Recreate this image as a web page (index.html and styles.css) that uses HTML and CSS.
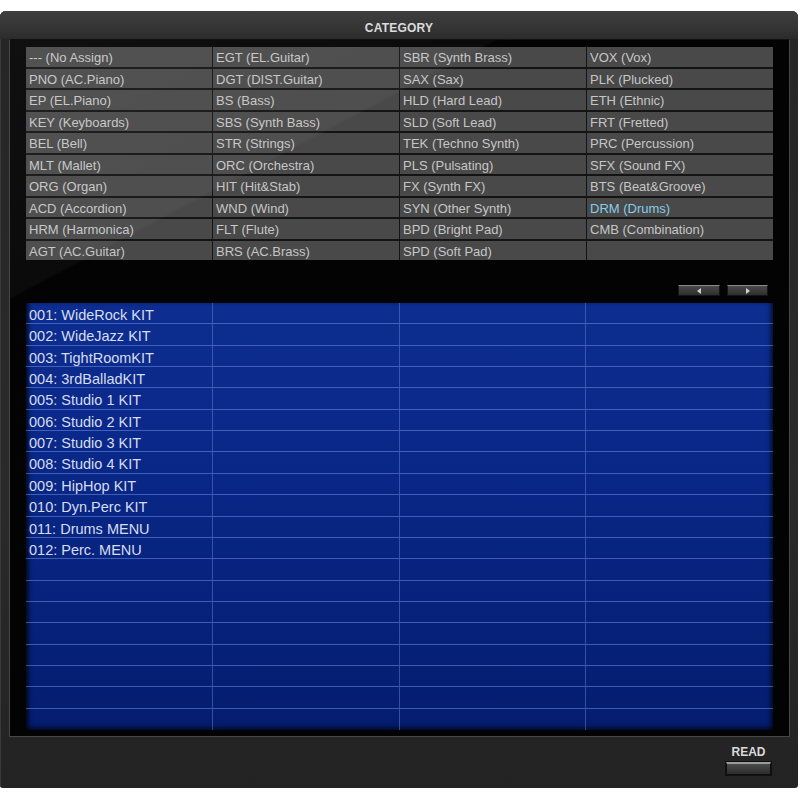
FILE: index.html
```html
<!DOCTYPE html>
<html>
<head>
<meta charset="utf-8">
<link rel="stylesheet" href="styles.css">
</head>
<body>
<div class="frame">
  <div class="title">CATEGORY</div>
  <div class="panel">
    <div class="cats">
      <div class="cell">--- (No Assign)</div><div class="cell">EGT (EL.Guitar)</div><div class="cell">SBR (Synth Brass)</div><div class="cell">VOX (Vox)</div>
      <div class="cell">PNO (AC.Piano)</div><div class="cell">DGT (DIST.Guitar)</div><div class="cell">SAX (Sax)</div><div class="cell">PLK (Plucked)</div>
      <div class="cell">EP (EL.Piano)</div><div class="cell">BS (Bass)</div><div class="cell">HLD (Hard Lead)</div><div class="cell">ETH (Ethnic)</div>
      <div class="cell">KEY (Keyboards)</div><div class="cell">SBS (Synth Bass)</div><div class="cell">SLD (Soft Lead)</div><div class="cell">FRT (Fretted)</div>
      <div class="cell">BEL (Bell)</div><div class="cell">STR (Strings)</div><div class="cell">TEK (Techno Synth)</div><div class="cell">PRC (Percussion)</div>
      <div class="cell">MLT (Mallet)</div><div class="cell">ORC (Orchestra)</div><div class="cell">PLS (Pulsating)</div><div class="cell">SFX (Sound FX)</div>
      <div class="cell">ORG (Organ)</div><div class="cell">HIT (Hit&amp;Stab)</div><div class="cell">FX (Synth FX)</div><div class="cell">BTS (Beat&amp;Groove)</div>
      <div class="cell">ACD (Accordion)</div><div class="cell">WND (Wind)</div><div class="cell">SYN (Other Synth)</div><div class="cell selected">DRM (Drums)</div>
      <div class="cell">HRM (Harmonica)</div><div class="cell">FLT (Flute)</div><div class="cell">BPD (Bright Pad)</div><div class="cell">CMB (Combination)</div>
      <div class="cell">AGT (AC.Guitar)</div><div class="cell">BRS (AC.Brass)</div><div class="cell">SPD (Soft Pad)</div><div class="cell"></div>
    </div>
    <div class="nav">
      <div class="navbtn"><span class="tri left"></span></div>
      <div class="navbtn"><span class="tri right"></span></div>
    </div>
    <div class="list">
      <div class="item">001: WideRock KIT</div><div class="item"></div><div class="item"></div><div class="item"></div>
      <div class="item">002: WideJazz KIT</div><div class="item"></div><div class="item"></div><div class="item"></div>
      <div class="item">003: TightRoomKIT</div><div class="item"></div><div class="item"></div><div class="item"></div>
      <div class="item">004: 3rdBalladKIT</div><div class="item"></div><div class="item"></div><div class="item"></div>
      <div class="item">005: Studio 1 KIT</div><div class="item"></div><div class="item"></div><div class="item"></div>
      <div class="item">006: Studio 2 KIT</div><div class="item"></div><div class="item"></div><div class="item"></div>
      <div class="item">007: Studio 3 KIT</div><div class="item"></div><div class="item"></div><div class="item"></div>
      <div class="item">008: Studio 4 KIT</div><div class="item"></div><div class="item"></div><div class="item"></div>
      <div class="item">009: HipHop KIT</div><div class="item"></div><div class="item"></div><div class="item"></div>
      <div class="item">010: Dyn.Perc KIT</div><div class="item"></div><div class="item"></div><div class="item"></div>
      <div class="item">011: Drums MENU</div><div class="item"></div><div class="item"></div><div class="item"></div>
      <div class="item">012: Perc. MENU</div><div class="item"></div><div class="item"></div><div class="item"></div>
      <div class="item"></div><div class="item"></div><div class="item"></div><div class="item"></div>
      <div class="item"></div><div class="item"></div><div class="item"></div><div class="item"></div>
      <div class="item"></div><div class="item"></div><div class="item"></div><div class="item"></div>
      <div class="item"></div><div class="item"></div><div class="item"></div><div class="item"></div>
      <div class="item"></div><div class="item"></div><div class="item"></div><div class="item"></div>
      <div class="item"></div><div class="item"></div><div class="item"></div><div class="item"></div>
      <div class="item"></div><div class="item"></div><div class="item"></div><div class="item"></div>
      <div class="item last"></div><div class="item last"></div><div class="item last"></div><div class="item last"></div>
    </div>
  </div>
  <div class="footer">
    <div class="read">
      <span class="readlabel">READ</span>
      <div class="readbtn"></div>
    </div>
  </div>
</div>
</body>
</html>
```

FILE: styles.css
```css
html, body {
  margin: 0;
  padding: 0;
  background: #ffffff;
}

body {
  font-family: "Liberation Sans", Arial, sans-serif;
}

.frame {
  margin-top: 11px;
  width: 798px;
  height: 777px;
  border-radius: 6px 6px 3px 3px;
  background: linear-gradient(180deg, #3a3a3a 0px, #262626 28px, #2a2a2a 60%, #232323 100%);
  box-shadow: inset 0 1px 0 #4a4a4a, inset 1px 0 0 #3a3a3a;
  display: flex;
  flex-direction: column;
  box-sizing: border-box;
}

.title {
  height: 28px;
  box-sizing: border-box;
  padding-top: 6px;
  display: flex;
  align-items: center;
  justify-content: center;
  color: #dcdcdc;
  font-size: 12px;
  font-weight: bold;
  letter-spacing: 0.2px;
  background: linear-gradient(180deg, #3e3e3e 0%, #353535 60%, #2b2b2b 100%);
  border-radius: 6px 6px 0 0;
}

.panel {
  position: relative;
  margin-left: 9px;
  width: 781px;
  height: 698px;
  box-sizing: border-box;
  border: 1px solid #474747;
  border-top-color: #111;
  background: #030303;
  padding: 7px 16px 6px 16px;
}

.panel::after {
  content: "";
  position: absolute;
  left: 0;
  top: 0;
  right: 0;
  height: 262px;
  pointer-events: none;
  background: linear-gradient(152deg, rgba(255,255,255,0.05) 0%, rgba(255,255,255,0.03) 38%, rgba(255,255,255,0) 38.5%);
}

.cats {
  height: 213px;
  display: grid;
  grid-template-columns: repeat(4, 1fr);
  grid-template-rows: repeat(10, 1fr);
  row-gap: 2px;
  column-gap: 1px;
  background: #141414;
}

.cell {
  background: #494949;
  color: #c6c6c6;
  font-size: 13px;
  line-height: 19px;
  padding-top: 1px;
  padding-left: 3px;
  white-space: nowrap;
  overflow: hidden;
}

.cell.selected {
  color: #86cdea;
}

.nav {
  height: 43px;
  box-sizing: border-box;
  padding-top: 25px;
  padding-right: 5px;
  display: flex;
  justify-content: flex-end;
  align-items: flex-start;
  gap: 7px;
}

.navbtn {
  width: 42px;
  height: 11px;
  box-sizing: border-box;
  border: 1px solid #151515;
  border-top: 1px solid #8a8a8a;
  background: linear-gradient(180deg, #4a4a4a 0%, #2e2e2e 100%);
  display: flex;
  align-items: center;
  justify-content: center;
}

.navbtn + .navbtn {
  width: 41px;
}

.tri {
  width: 0;
  height: 0;
  border-top: 3px solid transparent;
  border-bottom: 3px solid transparent;
}

.tri.left {
  border-right: 4px solid #d0d0d0;
}

.tri.right {
  border-left: 4px solid #d0d0d0;
}

.list {
  height: 427px;
  display: grid;
  grid-template-columns: repeat(4, 1fr);
  grid-template-rows: repeat(20, 1fr);
  background: linear-gradient(180deg, #0d2d90 0%, #092787 40%, #041d70 100%);
  box-shadow: inset 5px 0 5px -3px rgba(0,0,0,0.85), inset -5px 0 5px -3px rgba(0,0,0,0.7), inset 0 -6px 6px -4px rgba(0,0,0,0.7);
}

.item {
  border-bottom: 1px solid rgba(110,140,225,0.55);
  border-right: 1px solid rgba(110,140,225,0.45);
  color: #d6ddef;
  font-size: 14.5px;
  line-height: 20px;
  padding-top: 2px;
  padding-left: 3px;
  white-space: nowrap;
  overflow: hidden;
}

.item:nth-child(4n) {
  border-right: none;
}

.item.last {
  border-bottom: none;
}

.footer {
  flex: 1;
  display: flex;
  justify-content: flex-end;
  padding-right: 27px;
}

.read {
  display: flex;
  flex-direction: column;
  align-items: center;
  width: 45px;
  padding-top: 8px;
}

.readlabel {
  color: #dadada;
  font-size: 12px;
  font-weight: bold;
  line-height: 14px;
}

.readbtn {
  margin-top: 3px;
  width: 45px;
  height: 13px;
  box-sizing: border-box;
  border: 1px solid #0e0e0e;
  border-top: 2px solid #9a9a9a;
  background: linear-gradient(180deg, #4a4a4a 0%, #2c2c2c 100%);
  box-shadow: 0 0 0 1px #111;
}
```
